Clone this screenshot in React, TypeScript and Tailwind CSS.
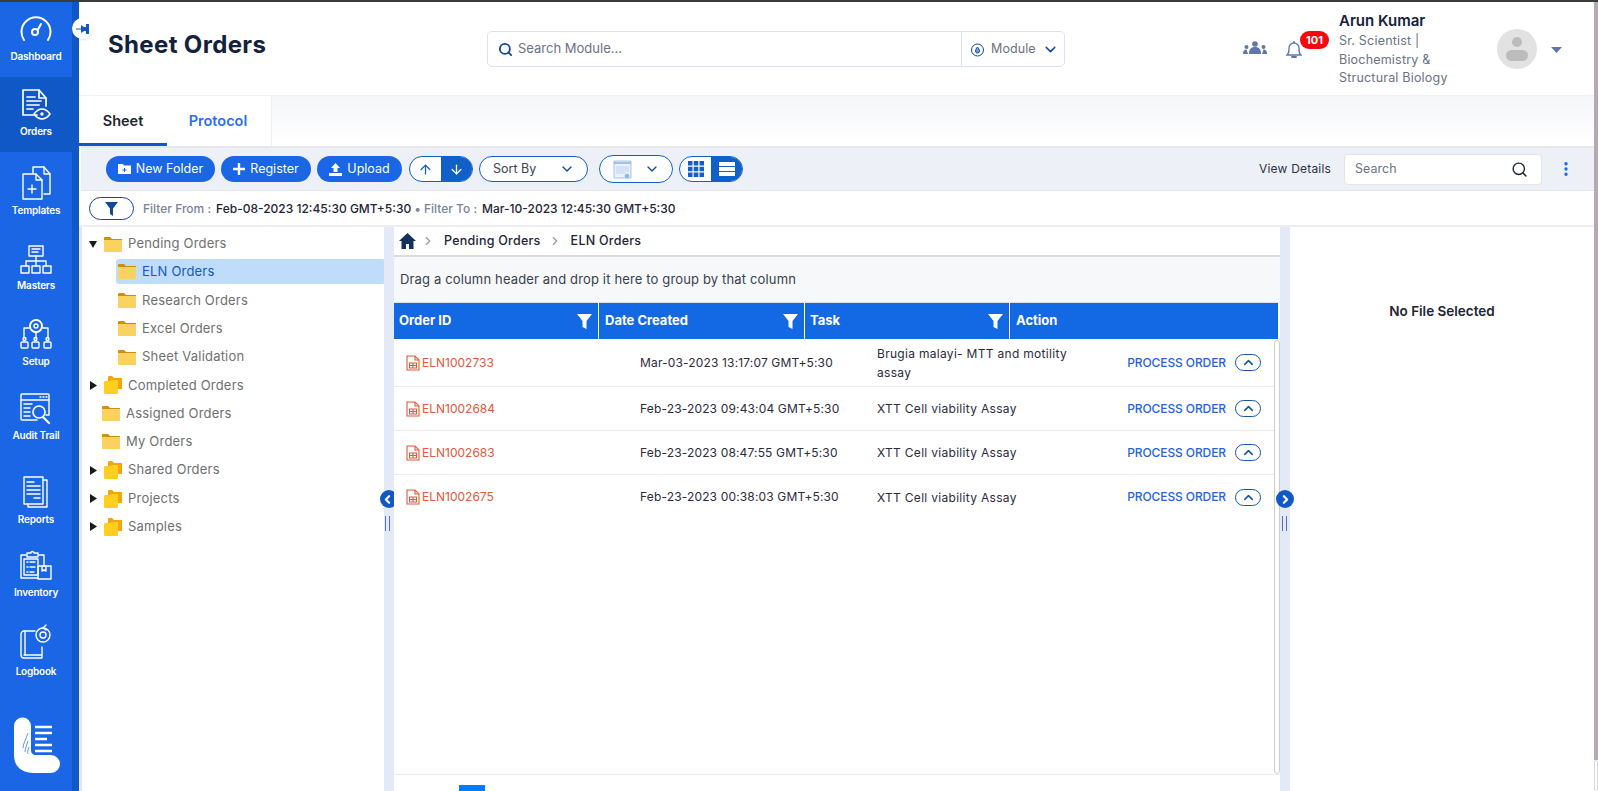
import { ChevronDown, ChevronLeft, ChevronRight, ChevronUp, Search, ArrowUp, ArrowDown, MoreVertical } from "lucide-react"
import type { ReactNode } from "react"

const font = "font-['Inter',sans-serif]"

function Folder({ open }: { open?: boolean }) {
    if (open) {
        return (
            <svg width="18" height="15" viewBox="0 0 18 15" className="shrink-0">
                <path d="M0 1a1 1 0 0 1 1-1h5l2 2h10v3H0z" fill="#cf8f0a" />
                <path d="M0 3h18v12H0z" fill="#fbd25f" />
            </svg>
        )
    }
    return (
        <svg width="18" height="18" viewBox="0 0 18 18" className="shrink-0">
            <path d="M4 1a1 1 0 0 1 1-1h3l2 2h8v11H4z" fill="#f5a60a" />
            <path d="M0 6a1 1 0 0 1 1-1h5l2-1h6v13a1 1 0 0 1-1 1H1a1 1 0 0 1-1-1z" fill="#ffcf1f" />
        </svg>
    )
}

function Caret({ open }: { open?: boolean }) {
    return (
        <svg width="8" height="9" viewBox="0 0 8 9" className="shrink-0">
            {open ? <path d="M0 1h8L4 8z" fill="#1a1a1a" /> : <path d="M1 0l7 4.5L1 9z" fill="#1a1a1a" />}
        </svg>
    )
}

function TreeRow({ label, caret, open, className }: { label: string; caret?: boolean; open?: boolean; className?: string }) {
    return (
        <div className={`h-[28.3px] flex items-center text-[13px] text-[#6f6f6f] tracking-[0.2px] ${className}`}>
            {caret && <span className="w-[15px] flex"><Caret open={open} /></span>}
            <Folder open={open} />
            <span className="ml-[6px]">{label}</span>
        </div>
    )
}

function IconStroke({ children, w = 32, h = 34 }: { children: ReactNode; w?: number; h?: number }) {
    return (
        <svg width={w} height={h} viewBox={`0 0 ${w} ${h}`} fill="none" stroke="white" strokeWidth="1.4" strokeLinecap="round" strokeLinejoin="round">
            {children}
        </svg>
    )
}

const sideItems: { label: string; box: string; gap: string; icon: ReactNode }[] = [
    {
        label: "Dashboard", box: "h-[75px] w-[72px] pt-[13px] bg-[#1a66e5]", gap: "mt-[5px]",
        icon: (
            <IconStroke h={30}>
                <path d="M4 25A14.500 14.500 0 1 1 28 25" strokeWidth="2" />
                <circle cx="15" cy="17" r="3" strokeWidth="2" />
                <path d="M18 14.500l3-5.500" strokeWidth="2" />
            </IconStroke>
        ),
    },
    {
        label: "Orders", box: "h-[75px] w-[79px] pr-[7px] pt-[11px] bg-[#1158c7]", gap: "mt-[3px]",
        icon: (
            <IconStroke>
                <path d="M17 27H3V2h16l7 8v8" strokeWidth="1.7" />
                <path d="M19 2v8h7M7 9h8M7 13h14M7 17h12M7 21h6" strokeWidth="1.7" />
                <path d="M14 26c3-4 6-5 8-5s5 1 8 5c-3 4-6 5-8 5s-5-1-8-5z" strokeWidth="1.7" />
                <circle cx="22" cy="26" r="1" fill="white" />
            </IconStroke>
        ),
    },
    {
        label: "Templates", box: "h-[79px] w-[72px] pt-[13px]", gap: "mt-[3px]",
        icon: (
            <IconStroke h={36}>
                <path d="M13 8V2h11l6 7v20h-6" />
                <path d="M24 2v7h6" />
                <path d="M3 9h13l6 6v19H3z" />
                <path d="M16 9v6h6M12 20v8M8 24h8" />
            </IconStroke>
        ),
    },
    {
        label: "Masters", box: "h-[75px] w-[72px] pt-[14px]", gap: "mt-[4px]",
        icon: (
            <IconStroke h={30}>
                <rect x="9" y="1" width="14" height="10" />
                <path d="M12 4h8M12 7h6M16 11v5M6 21v-5h20v5M16 16v5" />
                <rect x="1" y="21" width="8" height="7" />
                <rect x="12" y="21" width="8" height="7" />
                <rect x="23" y="21" width="8" height="7" />
            </IconStroke>
        ),
    },
    {
        label: "Setup", box: "h-[76px] w-[72px] pt-[12px]", gap: "mt-[5px]",
        icon: (
            <IconStroke h={32}>
                <circle cx="16" cy="8" r="6" strokeDasharray="3 1" strokeWidth="2" />
                <circle cx="16" cy="8" r="2" />
                <path d="M9 10H4v10M23 10h5v10M16 15v5" />
                <rect x="1" y="24" width="7" height="6" rx="1" />
                <rect x="12" y="24" width="7" height="6" rx="1" />
                <rect x="24" y="24" width="7" height="6" rx="1" />
                <circle cx="4.500" cy="21" r="1.500" />
                <circle cx="15.500" cy="21" r="1.500" />
                <circle cx="27.500" cy="21" r="1.500" />
            </IconStroke>
        ),
    },
    {
        label: "Audit Trail", box: "h-[74px] w-[72px] pt-[11px]", gap: "mt-[4px]",
        icon: (
            <IconStroke h={32}>
                <path d="M26 22h3V2a1 1 0 0 0-1-1H2a1 1 0 0 0-1 1v24a1 1 0 0 0 1 1h15" />
                <path d="M1 7h28M20 4h1M23 4h1M26 4h1M4 11h8M4 15h6M4 19h6M4 23h6" />
                <circle cx="19" cy="19" r="6" strokeWidth="1.700" />
                <path d="M23 24l6 6" strokeWidth="2.200" />
            </IconStroke>
        ),
    },
    {
        label: "Reports", box: "h-[83px] w-[72px] pt-[18px]", gap: "mt-[5px]",
        icon: (
            <IconStroke h={34}>
                <path d="M4 3h19v27H4z" />
                <path d="M23 6h4v27H8v-3" />
                <path d="M7 8h7M7 12h13M7 16h13M7 20h13M14 24h6" />
            </IconStroke>
        ),
    },
    {
        label: "Inventory", box: "h-[74px] w-[72px] pt-[11px]", gap: "mt-[4px]",
        icon: (
            <IconStroke h={32}>
                <path d="M18 28H1V5h5M19 5h5v11" />
                <path d="M7 3h4a1.500 1.500 0 0 1 3 0h4v4H7z" />
                <path d="M4 9v16h14V9z" />
                <path d="M7 12h1M7 17h1M7 22h1M10 12h5M10 17h5M10 22h4" />
                <rect x="18" y="16" width="13" height="13" />
                <path d="M22 16v5l2-1 2 1v-5" />
            </IconStroke>
        ),
    },
    {
        label: "Logbook", box: "h-[78px] w-[72px] pt-[11px]", gap: "mt-[5px]",
        icon: (
            <IconStroke h={36}>
                <path d="M15 7H4a3 3 0 0 0-3 3v21a3 3 0 0 0 3 3h18v-3M22 31H4M22 31v-8" />
                <path d="M5 7v24" />
                <circle cx="23" cy="11" r="7" />
                <circle cx="23" cy="11" r="3" />
                <path d="M23 4l3-3M23 4l3 2" />
            </IconStroke>
        ),
    },
]

function Sidebar() {
    return (
        <aside className="w-[79px] shrink-0 bg-[#1158c7] flex flex-col">
            {sideItems.map((item) => (
                <div key={item.label} className={`flex flex-col items-center bg-[#1a66e5] text-white ${item.box}`}>
                    {item.icon}
                    <span className={`text-[10px] font-semibold leading-[12px] tracking-[-0.2px] ${item.gap}`}>{item.label}</span>
                </div>
            ))}
            <div className="w-[72px] flex-1 bg-[#1a66e5] flex justify-center">
                <svg width="46" height="57" viewBox="0 0 46 57" className="mt-[26px] ml-[2px]">
                    <path d="M0 9a8.500 8.500 0 0 1 17 0v24c0 3 2 5 5 5h15a9 9 0 0 1 0 18H20C7 56 0 49 0 38z" fill="white" />
                    <path d="M21 10h17M21 16h17M21 22h12M21 28h17M21 34h17" stroke="white" strokeWidth="2.400" />
                    <path d="M14 16c-2 6-5 11-5 15M14 24c-1 4-3 7-3 11M15 30c-1 3-2 5-1 7" stroke="#1a66e5" strokeWidth="0.700" fill="none" />
                </svg>
            </div>
        </aside>
    )
}

function Pill({ icon, label, className }: { icon: ReactNode; label: string; className: string }) {
    return (
        <button className={`h-[26px] rounded-full bg-[#1a66e5] text-white text-[12.500px] flex items-center justify-center gap-[5px] ${className}`}>
            {icon}
            {label}
        </button>
    )
}

function Funnel() {
    return (
        <svg width="15" height="15" viewBox="0 0 15 15">
            <path d="M0 0h15L9.500 7v8l-4-2V7z" fill="white" />
        </svg>
    )
}

const orders = [
    { id: "ELN1002733", date: "Mar-03-2023 13:17:07 GMT+5:30", task: "Brugia malayi- MTT and motility assay", row: "h-[48px]" },
    { id: "ELN1002684", date: "Feb-23-2023 09:43:04 GMT+5:30", task: "XTT Cell viability Assay", row: "h-[44px]" },
    { id: "ELN1002683", date: "Feb-23-2023 08:47:55 GMT+5:30", task: "XTT Cell viability Assay", row: "h-[44px]" },
    { id: "ELN1002675", date: "Feb-23-2023 00:38:03 GMT+5:30", task: "XTT Cell viability Assay", row: "h-[44px]" },
]

function OrderRow({ id, date, task, row, last }: { id: string; date: string; task: string; row: string; last: boolean }) {
    return (
        <div className={`flex items-center text-[12px] text-[#2b2b3a] ${row} ${last ? "" : "border-b border-[#ececec]"}`}>
            <div className="w-[205px] pl-[12px] flex items-center gap-[2px] text-[#e0593a]">
                <svg width="14" height="16" viewBox="0 0 14 16" fill="none" stroke="#e0593a" strokeWidth="1.100">
                    <path d="M1 1h8l4 4v10H1z" />
                    <path d="M9 1v4h4" />
                    <path d="M3.500 8h7v5h-7zM3.500 10.500h7M7 8v5" />
                </svg>
                {id}
            </div>
            <div className="w-[205px] pl-[41px] whitespace-nowrap tracking-[0.15px]">{date}</div>
            <div className="w-[280px] pl-[73px] leading-[19px] shrink-0 whitespace-normal tracking-[0.3px]">{task}</div>
            <div className="flex-1 flex items-center justify-end pr-[13px] gap-[9px]">
                <span className="text-[#2563d8] font-medium whitespace-nowrap tracking-[-0.1px]">PROCESS ORDER</span>
                <span className="w-[26px] h-[17px] rounded-full border border-[#1158a7] flex items-center justify-center">
                    <ChevronUp size={15} strokeWidth={2.500} className="text-[#1158a7]" />
                </span>
            </div>
        </div>
    )
}

export default function App() {
    return (
        <div className={`w-[1598px] h-[791px] overflow-hidden flex flex-col bg-white ${font}`}>
            <div className="h-[2px] bg-[#3c3c3c] shrink-0" />
            <div className="flex-1 flex min-h-0 relative">
                <Sidebar />
                <button className="absolute left-[72px] top-[16px] w-[21px] h-[21px] rounded-full bg-white shadow flex items-center justify-center z-20">
                    <svg width="13" height="10" viewBox="0 0 13 10">
                        <path d="M0 4.500h5V1l3 2h2V0h3v10h-3V7H8l-3 2V5.500H0z" fill="#1158c7" />
                    </svg>
                </button>

                <div className="flex-1 min-w-0 flex flex-col">
                    <header className="h-[94px] shrink-0 flex items-start border-b border-[#eeeff2]">
                        <h1 className="ml-[29px] mt-[27px] text-[24px] leading-[32px] font-bold text-[#14213d] w-[379px] tracking-[0.35px]">Sheet Orders</h1>
                        <div className="mt-[29px] w-[578px] h-[36px] rounded-[5px] border border-[#d9e3f3] flex items-center">
                            <Search size={15} strokeWidth={3} className="ml-[10px] text-[#11479e]" />
                            <span className="ml-[5px] text-[13px] text-[#6b7280] flex-1">Search Module...</span>
                            <div className="h-full w-[103px] border-l border-[#d9e3f3] flex items-center pl-[8px] text-[12.500px] text-[#6b7280]">
                                <svg width="15" height="15" viewBox="0 0 15 15" fill="none" stroke="#11479e" strokeWidth="1">
                                    <circle cx="7.500" cy="8" r="6" />
                                    <path d="M7.500 5c-1.500 2-2 3-2 4a2 2 0 0 0 4 0c0-1-.5-2-2-4z" fill="#6fa0e8" />
                                </svg>
                                <span className="ml-[6px] tracking-[0.1px]">Module</span>
                                <ChevronDown size={17} className="ml-[6px] text-[#11479e]" />
                            </div>
                        </div>
                        <div className="ml-[178px] mt-[39px] flex items-start">
                            <svg width="24" height="14" viewBox="0 0 24 14" fill="#5f77a8">
                                <circle cx="12" cy="3" r="2.800" />
                                <path d="M6 13c0-5 2-7 6-7s6 2 6 7z" />
                                <circle cx="3.500" cy="6" r="2" />
                                <path d="M0 13c0-3 1-4.500 3.500-4.500L5 13z" />
                                <circle cx="20.500" cy="6" r="2" />
                                <path d="M24 13c0-3-1-4.500-3.500-4.500L19 13z" />
                            </svg>
                        </div>
                        <div className="ml-[20px] mt-[33px] relative w-[52px] h-[28px]">
                            <svg width="16" height="19" viewBox="0 0 16 19" fill="none" stroke="#5f77a8" strokeWidth="1.300" className="absolute -left-[1px] top-[5px]">
                                <path d="M1 15h14c-2-2-2-3-2-7a5 5 0 0 0-10 0c0 4 0 5-2 7zM8 1v2" />
                                <path d="M6 17h4" strokeWidth="2" strokeLinecap="round" />
                            </svg>
                        </div>
                        <span className="absolute left-[1300px] top-[29px] w-[29px] h-[18px] rounded-full bg-[#f40a0a] text-white text-[11px] font-bold flex items-center justify-center leading-none">101</span>
                        <div className="w-[142px] mt-[9px] shrink-0">
                            <div className="text-[15px] font-semibold text-[#14213d] leading-[20px]">Arun Kumar</div>
                            <div className="text-[12.500px] text-[#6b7280] leading-[18.500px] mt-[1px] tracking-[0.2px] whitespace-nowrap">Sr. Scientist |<br />Biochemistry &amp;<br />Structural Biology</div>
                        </div>
                        <div className="ml-[16px] mt-[27px] w-[40px] h-[40px] rounded-full bg-[#e2e2e2] overflow-hidden flex flex-col items-center">
                            <span className="mt-[8px] w-[10px] h-[10px] rounded-full bg-[#bcbcbc]" />
                            <span className="mt-[3px] w-[22px] h-[11px] rounded-full bg-[#bcbcbc]" />
                        </div>
                        <svg width="11" height="6" viewBox="0 0 11 6" className="ml-[14px] mt-[45px]">
                            <path d="M0 0h11L5.500 6z" fill="#5f77a8" />
                        </svg>
                    </header>

                    <div className="h-[50px] shrink-0 flex bg-gradient-to-b from-[#f5f6f8] to-white">
                        <div className="w-[88px] bg-white border-b-[3px] border-[#1158c7] flex items-center justify-center pt-[2px] text-[14.500px] font-semibold text-[#22252e]">Sheet</div>
                        <div className="w-[105px] bg-white border-r border-[#eeeff2] flex items-center justify-center pb-[1px] pr-[2px] text-[14.500px] font-semibold text-[#2a6ff0]">Protocol</div>
                    </div>

                    <div className="h-[45px] shrink-0 bg-[#edf1f7] border-y-2 border-y-[#e5e7ea] border-b-1 flex items-center pl-[25px] ml-[2px]">
                        <Pill className="w-[109px]" label="New Folder" icon={
                            <svg width="13" height="10" viewBox="0 0 13 10"><path d="M0 0h5l1 1.500h7V10H0z" fill="white" /><path d="M6.500 4v4M4.500 6h4" stroke="#1a66e5" /></svg>
                        } />
                        <Pill className="w-[90px] ml-[6px]" label="Register" icon={
                            <svg width="12" height="12" viewBox="0 0 12 12"><path d="M6 0v12M0 6h12" stroke="white" strokeWidth="2.400" /></svg>
                        } />
                        <Pill className="w-[85px] ml-[6px]" label="Upload" icon={
                            <svg width="13" height="13" viewBox="0 0 13 13" fill="white"><path d="M6.500 0L11 5H8.500v4h-4V5H2zM0 10h13v3H0z" /></svg>
                        } />
                        <div className="ml-[7px] w-[64px] h-[26px] rounded-full border border-[#1160c9] overflow-hidden flex bg-white">
                            <span className="w-[31px] flex items-center justify-center text-[#1160c9]"><ArrowUp size={15} /></span>
                            <span className="flex-1 bg-[#1160c9] flex items-center justify-center text-white"><ArrowDown size={15} /></span>
                        </div>
                        <div className="ml-[6px] w-[109px] h-[26px] rounded-full border border-[#1160c9] bg-white flex items-center justify-between pl-[13px] pr-[12px] text-[12.500px] text-[#3d4250]">
                            Sort By
                            <ChevronDown size={16} className="text-[#11479e]" />
                        </div>
                        <div className="ml-[11px] w-[74px] h-[28px] rounded-full border border-[#1160c9] bg-white flex items-center justify-between pl-[13px] pr-[12px]">
                            <svg width="19" height="19" viewBox="0 0 19 19" fill="#eaf1fb" stroke="#8fb6e6" strokeWidth="0.800">
                                <path d="M1 1h17v17H1z" />
                                <path d="M1 3h17" strokeWidth="1.600" />
                                <path d="M3 7h13M3 9h13M3 11h13M3 13h9" strokeWidth="0.500" />
                                <circle cx="14" cy="16" r="2" fill="#8fb6e6" />
                            </svg>
                            <ChevronDown size={16} className="text-[#11479e]" />
                        </div>
                        <div className="ml-[6px] w-[64px] h-[26px] rounded-full border border-[#1160c9] overflow-hidden flex bg-white">
                            <span className="w-[31px] flex items-center justify-center">
                                <svg width="16" height="16" viewBox="0 0 16 16" fill="#1160c9">
                                    <path d="M0 0h4.500v4.500H0zM5.700 0h4.600v4.500H5.700zM11.500 0H16v4.500h-4.500zM0 5.700h4.500v4.600H0zM5.700 5.700h4.600v4.600H5.700zM11.500 5.700H16v4.600h-4.500zM0 11.500h4.500V16H0zM5.700 11.500h4.600V16H5.700zM11.500 11.500H16V16h-4.500z" />
                                </svg>
                            </span>
                            <span className="flex-1 bg-[#1160c9] flex items-center justify-center">
                                <svg width="16" height="14" viewBox="0 0 16 14" fill="white">
                                    <path d="M0 0h16v4H0zM0 5h16v4H0zM0 10h16v4H0z" />
                                </svg>
                            </span>
                        </div>
                        <span className="ml-[516px] text-[12px] text-[#2b3245] whitespace-nowrap tracking-[0.2px]">View Details</span>
                        <div className="ml-[13px] w-[198px] h-[31px] bg-white rounded-[4px] border border-[#e1e4ea] flex items-center justify-between pl-[10px] pr-[13px] text-[12.500px] text-[#6b7280]">
                            Search
                            <Search size={17} className="text-[#20262e]" />
                        </div>
                        <MoreVertical size={18} strokeWidth={2.500} className="ml-[15px] text-[#1a66e5]" />
                    </div>

                    <div className="h-[36px] shrink-0 border-b-2 border-[#eceef1] flex items-center pl-[10px] pt-[1px] text-[12px] whitespace-nowrap">
                        <span className="w-[45px] h-[23px] rounded-full border border-[#11479e] flex items-center justify-center">
                            <svg width="13" height="14" viewBox="0 0 13 14"><path d="M0 0h13L8 6.500V14l-3-2V6.500z" fill="#11479e" /></svg>
                        </span>
                        <span className="ml-[9px] text-[#7b8494] font-medium">Filter From :</span>
                        <span className="ml-[5px] font-medium text-[#1d2433]">Feb-08-2023 12:45:30 GMT+5:30</span>
                        <span className="mx-[3px] text-[#7b8494]">•</span>
                        <span className="text-[#7b8494] font-medium">Filter To :</span>
                        <span className="ml-[5px] font-medium text-[#1d2433]">Mar-10-2023 12:45:30 GMT+5:30</span>
                    </div>

                    <div className="flex-1 min-h-0 flex">
                        <div className="w-[305px] shrink-0 border-l-[3px] border-[#e3e6ea] pl-[7px] pt-[3px]">
                            <TreeRow label="Pending Orders" caret open />
                            <div className="ml-[27px] -mr-[1px] h-[25px] mt-[1px] mb-[2px] rounded-[3px] bg-[#bfdcfb] flex items-center pl-[2px] text-[13px] tracking-[0.2px] text-[#1259c3]">
                                <Folder open />
                                <span className="ml-[6px]">ELN Orders</span>
                            </div>
                            <TreeRow label="Research Orders" open className="ml-[29px]" />
                            <TreeRow label="Excel Orders" open className="ml-[29px]" />
                            <TreeRow label="Sheet Validation" open className="ml-[29px]" />
                            <TreeRow label="Completed Orders" caret />
                            <TreeRow label="Assigned Orders" open className="ml-[13px]" />
                            <TreeRow label="My Orders" open className="ml-[13px]" />
                            <TreeRow label="Shared Orders" caret />
                            <TreeRow label="Projects" caret />
                            <TreeRow label="Samples" caret />
                        </div>

                        <div className="w-[10px] shrink-0 bg-[#e3e9f6] relative">
                            <span className="absolute -left-[4px] top-[263px] w-[18px] h-[18px] rounded-full bg-[#1158c7] flex items-center justify-center">
                                <ChevronLeft size={13} strokeWidth={4} className="text-white -ml-[4px]" />
                            </span>
                            <span className="absolute left-[1px] top-[289px] w-[5px] h-[15px] border-x-[1.500px] border-[#5b6fc0]" />
                        </div>

                        <main className="w-[886px] shrink-0 relative z-10 bg-white flex flex-col">
                            <div className="h-[30px] shrink-0 border-b-2 border-[#dcdcdc] flex items-center text-[12.500px] tracking-[0.25px] font-medium text-[#1d2433]">
                                <svg width="17" height="16" viewBox="0 0 17 16" className="ml-[5px]" fill="#14305f">
                                    <path d="M8.500 0L17 8h-2.500v8H10v-5H7v5H2.500V8H0z" />
                                </svg>
                                <ChevronRight size={14} className="ml-[5px] text-[#9a9a9a]" />
                                <span className="ml-[9px]">Pending Orders</span>
                                <ChevronRight size={14} className="ml-[7px] text-[#9a9a9a]" />
                                <span className="ml-[9px]">ELN Orders</span>
                            </div>
                            <div className="h-[45px] shrink-0 bg-[#f7f8fa] flex items-center pl-[6px] text-[13px] tracking-[0.15px] text-[#3a3f4b]">Drag a column header and drop it here to group by that column</div>
                            <div className="h-[37px] shrink-0 w-[884px] border-t border-[#dde1e6] bg-[#1368e4] flex text-white text-[13px] font-bold">
                                <div className="w-[205px] border-r border-white flex items-center justify-between pl-[5px] pr-[6px]">Order ID<Funnel /></div>
                                <div className="w-[206px] border-r border-white flex items-center justify-between pl-[6px] pr-[6px]">Date Created<Funnel /></div>
                                <div className="w-[205px] border-r border-white flex items-center justify-between pl-[5px] pr-[6px]">Task<Funnel /></div>
                                <div className="flex-1 flex items-center pl-[6px]">Action</div>
                            </div>
                            <div className="flex-1 min-h-0 relative">
                                <div className="w-[880px]">
                                    {orders.map((o, i) => (
                                        <OrderRow key={o.id} {...o} last={i === orders.length - 1} />
                                    ))}
                                </div>
                                <span className="absolute left-[880px] top-[1px] w-[6px] h-[434px] rounded-[3px] border border-[#cfcfcf] bg-white" />
                                <div className="absolute left-0 right-0 top-[435px] h-[1px] bg-[#ececf0]" />
                                <span className="absolute left-[65px] top-[446px] w-[26px] h-[6px] bg-[#007bff]" />
                            </div>
                        </main>

                        <div className="w-[10px] shrink-0 bg-[#e3e9f6] relative z-20">
                            <span className="absolute -left-[4px] top-[263px] w-[18px] h-[18px] rounded-full bg-[#1158c7] flex items-center justify-center">
                                <ChevronRight size={13} strokeWidth={4} className="text-white" />
                            </span>
                            <span className="absolute left-[2px] top-[289px] w-[5px] h-[15px] border-x-[1.500px] border-[#5b6fc0]" />
                        </div>

                        <div className="flex-1 flex justify-center pt-[74px] text-[13.500px] font-semibold text-[#20242c]">No File Selected</div>
                    </div>
                </div>

                <div className="w-[4px] shrink-0 bg-white flex flex-col">
                    <span className="h-[758px] bg-[#b8a8b4]" />
                    <span className="flex-1 border border-[#d8d8d8] rounded-[2px]" />
                </div>
            </div>
        </div>
    )
}
